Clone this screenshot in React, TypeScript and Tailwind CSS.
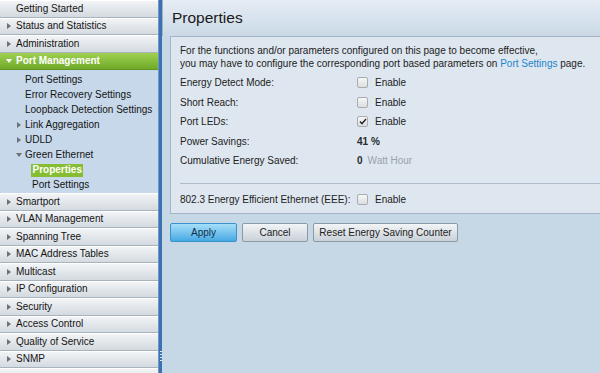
import React from 'react';

const FONT = { fontFamily: '"Liberation Sans", Arial, sans-serif' };

// Sidebar entries above and below the open "Port Management" group
const TOP_ITEMS = ['Getting Started', 'Status and Statistics', 'Administration'];
const BOTTOM_ITEMS = [
  'Smartport',
  'VLAN Management',
  'Spanning Tree',
  'MAC Address Tables',
  'Multicast',
  'IP Configuration',
  'Security',
  'Access Control',
  'Quality of Service',
  'SNMP',
  '',
];

function ArrowRight({ className = 'text-[#6b7177]' }: { className?: string }) {
  return (
    <svg width="4" height="6" viewBox="0 0 4 6" className={className}>
      <path d="M0 0 L4 3 L0 6 Z" fill="currentColor" />
    </svg>
  );
}

function ArrowDown({ className = 'text-[#6b7177]' }: { className?: string }) {
  return (
    <svg width="6" height="4" viewBox="0 0 6 4" className={className}>
      <path d="M0 0 L6 0 L3 4 Z" fill="currentColor" />
    </svg>
  );
}

function NavRow({ label, arrow = true }: { label: string; arrow?: boolean }) {
  return (
    <div className="h-[17.5px] shrink-0 flex items-center bg-gradient-to-b from-[#f2f4f6] to-[#d3dae0] border-t border-white border-b border-b-[#a7b3bd] text-[10px] text-[#141414]">
      <div className="w-[16px] flex justify-center pl-[1px]">{arrow && label && <ArrowRight />}</div>
      <span className="leading-none">{label}</span>
    </div>
  );
}

function SubRow({ label, indent, arrow }: { label: string; indent: number; arrow?: 'right' | 'down' }) {
  return (
    <div className="h-[15px] flex items-center text-[10px] text-[#141414]" style={{ paddingLeft: indent }}>
      {arrow && (
        <div className="w-[12px] -ml-[12px] flex justify-center">
          {arrow === 'right' ? <ArrowRight /> : <ArrowDown />}
        </div>
      )}
      <span className="leading-none">{label}</span>
    </div>
  );
}

function Checkbox({ checked }: { checked?: boolean }) {
  return (
    <span className="w-[11px] h-[11px] rounded-[2px] border border-[#a9adb1] bg-gradient-to-b from-[#f7f7f7] to-[#dcdedf] flex items-center justify-center">
      {checked && (
        <svg width="8" height="7" viewBox="0 0 8 7">
          <path d="M1 3.6 L3 5.6 L7 1" fill="none" stroke="#222" strokeWidth="1.4" />
        </svg>
      )}
    </span>
  );
}

function FieldRow({ label, children }: { label: string; children: React.ReactNode }) {
  return (
    <div className="h-[19.5px] flex items-center">
      <span className="w-[177px] shrink-0">{label}</span>
      <div className="flex items-center">{children}</div>
    </div>
  );
}

function EnableBox({ checked }: { checked?: boolean }) {
  return (
    <>
      <Checkbox checked={checked} />
      <span className="ml-[7px]">Enable</span>
    </>
  );
}

export default function App() {
  return (
    <div className="w-[600px] h-[373px] flex overflow-hidden bg-[#c6d7e6]" style={FONT}>
      {/* Left — navigation tree */}
      <nav className="w-[158px] shrink-0 bg-[#c6d8ea] flex flex-col overflow-hidden">
        {TOP_ITEMS.map((item, i) => (
          <NavRow key={item} label={item} arrow={i > 0} />
        ))}
        <div className="h-[17.5px] shrink-0 flex items-center bg-gradient-to-b from-[#9fd14e] to-[#6faa2a] border-b border-[#5f9424] text-[10px] font-bold text-white">
          <div className="w-[16px] flex justify-center pl-[1px]">
            <ArrowDown className="text-white" />
          </div>
          <span className="leading-none">Port Management</span>
        </div>
        <div className="shrink-0 pt-[2.5px] pb-[0.5px]">
          <SubRow label="Port Settings" indent={25} />
          <SubRow label="Error Recovery Settings" indent={25} />
          <SubRow label="Loopback Detection Settings" indent={25} />
          <SubRow label="Link Aggregation" indent={25} arrow="right" />
          <SubRow label="UDLD" indent={25} arrow="right" />
          <SubRow label="Green Ethernet" indent={25} arrow="down" />
          <div className="h-[15px] flex items-center pl-[31px]">
            <span className="bg-[#86bd32] text-white font-bold text-[10px] leading-none px-[1.5px] py-[1.5px]">Properties</span>
          </div>
          <SubRow label="Port Settings" indent={32} />
        </div>
        {BOTTOM_ITEMS.map((item, i) => (
          <NavRow key={item + i} label={item} />
        ))}
      </nav>

      {/* Splitter */}
      <div className="w-[4px] shrink-0 bg-[#3d70b0] border-l border-[#6f97c8] flex flex-col items-center justify-end pb-[12px]">
        <div className="flex flex-col gap-[2px]">
          {[0, 1, 2, 3].map((d) => (
            <span key={d} className="w-[2px] h-[1px] bg-[#dfe8f2]" />
          ))}
        </div>
      </div>

      {/* Right — page content */}
      <main className="flex-1 flex flex-col text-[10px] text-[#222]">
        <div className="h-[36px] flex items-center pl-[9px] bg-gradient-to-b from-[#e6edf4] to-[#cad9e7] border-l border-[#9fb3c7]">
          <h1 className="text-[15.5px] leading-none text-[#1a1a1a]">Properties</h1>
        </div>

        <section className="ml-[8px] bg-[#dee7f0] border border-r-0 border-[#a3b5c5] pl-[9px] pt-[7px] pb-[4px]">
          <p className="leading-[13px]">
            For the functions and/or parameters configured on this page to become effective,
            <br />
            you may have to configure the corresponding port based parameters on{' '}
            <span className="text-[#1b85c9]">Port Settings</span> page.
          </p>
          <div className="mt-[3px]">
            <FieldRow label="Energy Detect Mode:">
              <EnableBox />
            </FieldRow>
            <FieldRow label="Short Reach:">
              <EnableBox />
            </FieldRow>
            <FieldRow label="Port LEDs:">
              <EnableBox checked />
            </FieldRow>
            <FieldRow label="Power Savings:">
              <span className="font-bold text-[#2a2a2a]">41 %</span>
            </FieldRow>
            <FieldRow label="Cumulative Energy Saved:">
              <span className="font-bold text-[#2a2a2a]">0</span>
              <span className="ml-[5px] text-[#9aa1a8]">Watt Hour</span>
            </FieldRow>
          </div>
          <div className="mt-[12px] border-t border-[#aebccb] mb-[6px]" />
          <FieldRow label="802.3 Energy Efficient Ethernet (EEE):">
            <EnableBox />
          </FieldRow>
        </section>

        <div className="flex gap-[5px] ml-[8px] mt-[9px]">
          <button className="w-[67px] h-[19px] rounded-[2px] border border-[#3b93cc] bg-gradient-to-b from-[#a6def8] to-[#43a9e3] text-[10px] text-[#10304a] leading-none">
            Apply
          </button>
          <button className="w-[66px] h-[19px] rounded-[2px] border border-[#8d99a3] bg-gradient-to-b from-[#f3f5f7] to-[#c9d1d8] text-[10px] text-[#222] leading-none">
            Cancel
          </button>
          <button className="w-[145px] h-[19px] rounded-[2px] border border-[#8d99a3] bg-gradient-to-b from-[#f3f5f7] to-[#c9d1d8] text-[10px] text-[#222] leading-none">
            Reset Energy Saving Counter
          </button>
        </div>
      </main>
    </div>
  );
}
